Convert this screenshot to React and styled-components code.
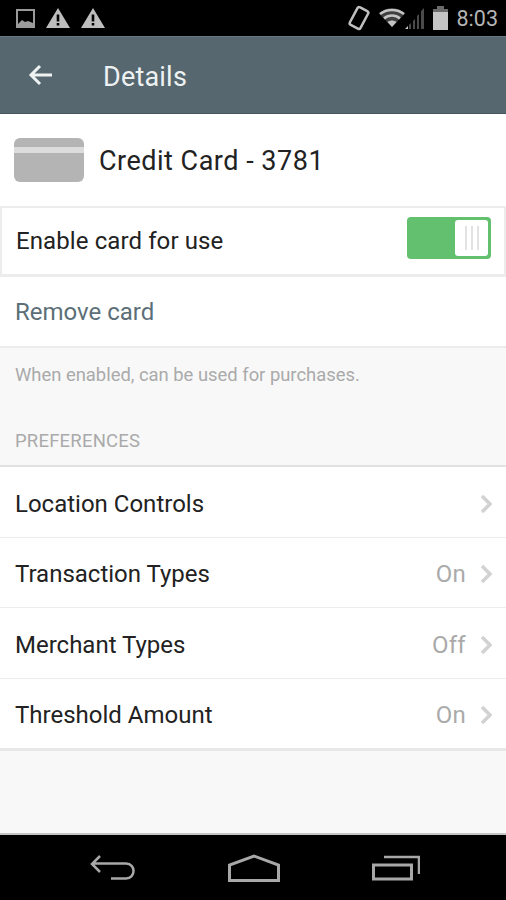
import React from 'react';
import styled, { createGlobalStyle } from 'styled-components';

const GlobalStyle = createGlobalStyle`
  html, body {
    margin: 0;
    padding: 0;
    background: #000;
  }
  body {
    font-family: Roboto, "Liberation Sans", sans-serif;
    -webkit-font-smoothing: antialiased;
  }
`;

const Screen = styled.div`
  width: 506px;
  height: 900px;
  display: flex;
  flex-direction: column;
  overflow: hidden;
  background: #f8f8f8;
`;

const StatusBar = styled.div`
  flex: 0 0 36px;
  background: #000;
  display: flex;
  align-items: center;
  justify-content: space-between;
  padding: 0 8px 0 16px;
  color: #b4b4b4;
`;

const StatusGroup = styled.div`
  display: flex;
  align-items: center;
  gap: ${p => p.$gap || 0}px;
`;

const Clock = styled.span`
  font-size: 21.5px;
  color: #b4b4b4;
  margin: 1px 0 0 9px;
`;

const Toolbar = styled.div`
  flex: 0 0 78px;
  box-sizing: border-box;
  background: #56676f;
  border-top: 1px solid #6c7b82;
  border-bottom: 1px solid #46565e;
  display: flex;
  align-items: center;
  padding-left: 28px;
  gap: 50px;
`;

const ToolbarTitle = styled.span`
  color: #eef2f3;
  font-size: 27px;
  letter-spacing: 0.2px;
  margin-top: 3px;
`;

const CardHeader = styled.div`
  flex: 0 0 92px;
  background: #fff;
  display: flex;
  align-items: center;
  padding-left: 14px;
  gap: 15px;
`;

const CardTitle = styled.span`
  font-size: 27px;
  color: #222;
  letter-spacing: 0.5px;
  margin-top: 2px;
`;

const ToggleRow = styled.div`
  flex: 0 0 71px;
  box-sizing: border-box;
  background: #fff;
  border: 2px solid #ececec;
  border-bottom-width: 3px;
  display: flex;
  align-items: center;
  justify-content: space-between;
  padding: 0 13px 0 14px;
`;

const RowLabel = styled.span`
  font-size: 24px;
  color: ${p => p.$color || '#222'};
  letter-spacing: ${p => p.$spacing || 0}px;
`;

const ToggleLabel = styled(RowLabel)`
  margin-bottom: 1px;
`;

const Toggle = styled.div`
  width: 84px;
  height: 42px;
  margin-bottom: 7px;
  box-sizing: border-box;
  border-radius: 4px;
  background: #62c06f;
  padding: 3px;
  display: flex;
  justify-content: flex-end;
`;

const ToggleKnob = styled.div`
  width: 33px;
  background: #fff;
  border-radius: 3px;
  display: flex;
  align-items: center;
  justify-content: center;
  gap: 4px;
`;

const KnobLine = styled.i`
  width: 2px;
  height: 24px;
  background: #e2e2e2;
`;

const RemoveRow = styled.div`
  flex: 0 0 71px;
  box-sizing: border-box;
  background: #fff;
  border-bottom: 2px solid #ececec;
  display: flex;
  align-items: center;
  padding-left: 15px;
`;

const Hint = styled.div`
  flex: 0 0 54px;
  box-sizing: border-box;
  display: flex;
  align-items: center;
  padding: 0 0 2px 15px;
  font-size: 18.4px;
  color: #aaa;
`;

const SectionLabel = styled.div`
  flex: 0 0 65px;
  box-sizing: border-box;
  padding: 27px 0 0 15px;
  font-size: 18.5px;
  line-height: 24px;
  letter-spacing: 0.2px;
  color: #aaa;
  border-bottom: 2px solid #e2e2e2;
`;

const List = styled.div`
  background: #fff;
  border-bottom: 3px solid #e8e8e8;
`;

const ListRow = styled.div`
  height: 70px;
  box-sizing: border-box;
  display: flex;
  align-items: center;
  padding: 3px 14px 0 15px;
  & + & {
    border-top: 1px solid #ececec;
    height: 70.4px;
    padding-top: 2px;
  }
  &:nth-child(n + 3) {
    padding-top: 4px;
  }
`;

const RowValue = styled.span`
  margin-left: auto;
  font-size: 24px;
  color: #aaa;
  letter-spacing: 0.3px;
  margin-right: 14px;
`;

const Chevron = styled.svg`
  width: 12px;
  height: 20px;
  margin-left: ${p => (p.$solo ? 'auto' : 0)};
`;

const Filler = styled.div`
  flex: 1;
`;

const NavBar = styled.div`
  flex: 0 0 67px;
  background: #000;
  border-top: 2px solid #c4c4c4;
  box-sizing: border-box;
  display: flex;
  align-items: center;
  justify-content: center;
  gap: 92px;
  padding-left: 4px;
  color: #a8a8a8;
`;

const rows = [
  { label: 'Location Controls' },
  { label: 'Transaction Types', value: 'On' },
  { label: 'Merchant Types', value: 'Off' },
  { label: 'Threshold Amount', value: 'On' }
];

const ChevronIcon = ({ solo }) => (
  <Chevron $solo={solo} viewBox="0 0 12 20">
    <path d="M2 2l8 8-8 8" fill="none" stroke="#d2d2d2" strokeWidth="3.500" />
  </Chevron>
);

const AlertIcon = () => (
  <svg width="24" height="20" viewBox="0 0 24 20">
    <path
      fillRule="evenodd"
      fill="#bdbdbd"
      d="M12 0l12 20H0zM10.7 6.5v7h2.6v-7zM10.7 15v2.6h2.6V15z"
    />
  </svg>
);

export default function App() {
  return (
    <Screen>
      <GlobalStyle />
      <StatusBar>
        <StatusGroup $gap={11}>
          <svg width="19" height="19" viewBox="0 0 19 19">
            <rect x="1" y="1" width="17" height="17" fill="none" stroke="#9a9a9a" strokeWidth="2" />
            <path d="M2 15l4-4 3 2 3-1 5 2v3H2z" fill="#9a9a9a" />
          </svg>
          <AlertIcon />
          <AlertIcon />
        </StatusGroup>
        <StatusGroup>
          <svg width="22" height="26" viewBox="0 0 22 26">
            <rect
              x="5"
              y="3"
              width="12"
              height="20"
              rx="2"
              fill="none"
              stroke="#c0c0c0"
              strokeWidth="2.500"
              transform="rotate(28 11 13)"
            />
          </svg>
          <svg width="26" height="20" viewBox="0 0 26 20" style={{ marginLeft: 9 }}>
            <path d="M0 5.500C7-1.500 19-1.500 26 5.500L13 19z" fill="#b4b4b4" opacity="0.35" />
            <path d="M1 6c6.500-5.500 17.500-5.500 24 0" fill="none" stroke="#c4c4c4" strokeWidth="2.500" />
            <path d="M5 10.500c4.500-4 11.500-4 16 0" fill="none" stroke="#c4c4c4" strokeWidth="2.500" />
            <path d="M8.500 14c2.500-2 6.500-2 9 0L13 19z" fill="#c4c4c4" />
          </svg>
          <svg width="20" height="24" viewBox="0 0 20 24">
            <path d="M4 19l2-2v6H4zM8 15l2-2v10H8zM12 10l2-2v15h-2zM16 5l3-3v21h-3z" fill="#4a4a4a" />
            <path d="M0 23l3-3v3z" fill="#c8c8c8" />
          </svg>
          <svg width="15" height="24" viewBox="0 0 15 24" style={{ marginLeft: 8 }}>
            <path d="M4 0h7v3h4v21H0V3h4z" fill="#c4c4c4" />
            <path d="M4 0h7v3h4v3H0V3h4z" fill="#6a6a6a" />
          </svg>
          <Clock>8:03</Clock>
        </StatusGroup>
      </StatusBar>
      <Toolbar>
        <svg width="25" height="22" viewBox="0 0 25 22">
          <path d="M24 11H3M12 2l-9 9 9 9" fill="none" stroke="#eef2f3" strokeWidth="3" />
        </svg>
        <ToolbarTitle>Details</ToolbarTitle>
      </Toolbar>
      <CardHeader>
        <svg width="70" height="44" viewBox="0 0 70 44">
          <rect width="70" height="44" rx="6" fill="#b4b4b4" />
          <rect y="9" width="70" height="6" fill="#dcdcdc" />
        </svg>
        <CardTitle>Credit Card - 3781</CardTitle>
      </CardHeader>
      <ToggleRow>
        <ToggleLabel $spacing={0.1}>Enable card for use</ToggleLabel>
        <Toggle>
          <ToggleKnob>
            <KnobLine />
            <KnobLine />
            <KnobLine />
          </ToggleKnob>
        </Toggle>
      </ToggleRow>
      <RemoveRow>
        <RowLabel $color="#5c6f78">Remove card</RowLabel>
      </RemoveRow>
      <Hint>When enabled, can be used for purchases.</Hint>
      <SectionLabel>PREFERENCES</SectionLabel>
      <List>
        {rows.map(row => (
          <ListRow key={row.label}>
            <RowLabel>{row.label}</RowLabel>
            {row.value && <RowValue>{row.value}</RowValue>}
            <ChevronIcon solo={!row.value} />
          </ListRow>
        ))}
      </List>
      <Filler />
      <NavBar>
        <svg width="46" height="25" viewBox="0 0 46 25">
          <path
            d="M10 1L2 9l8 8M2 8.500h34c10 0 10 15 0 15H21"
            fill="none"
            stroke="#a8a8a8"
            strokeWidth="2.500"
          />
        </svg>
        <svg width="52" height="28" viewBox="0 0 52 28">
          <path d="M1.500 26.500V11L26 2l24.500 9v15.500z" fill="none" stroke="#a8a8a8" strokeWidth="3" />
        </svg>
        <svg width="48" height="26" viewBox="0 0 48 26">
          <path d="M12 2h35v17" fill="none" stroke="#a8a8a8" strokeWidth="2.500" />
          <rect x="1.500" y="10" width="38" height="14" fill="none" stroke="#a8a8a8" strokeWidth="3" />
        </svg>
      </NavBar>
    </Screen>
  );
}
